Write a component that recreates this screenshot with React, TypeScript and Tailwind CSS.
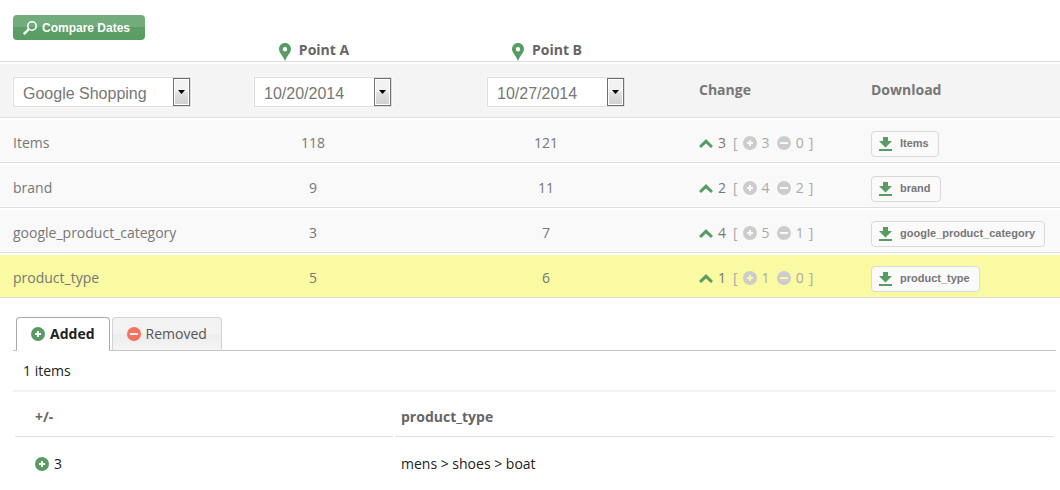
import { useState } from 'react';
import type { ReactNode } from 'react';
import clsx from 'clsx';

interface FieldRow {
  name: string;
  pointA: number;
  pointB: number;
  added: number;
  removed: number;
}

interface ChangedItem {
  count: number;
  value: string;
}

type TabId = 'added' | 'removed';

const ROWS: FieldRow[] = [
  { name: 'Items', pointA: 118, pointB: 121, added: 3, removed: 0 },
  { name: 'brand', pointA: 9, pointB: 11, added: 4, removed: 2 },
  { name: 'google_product_category', pointA: 3, pointB: 7, added: 5, removed: 1 },
  { name: 'product_type', pointA: 5, pointB: 6, added: 1, removed: 0 },
];

const SELECTED_ROW = 'product_type';

const CHANGED: Record<TabId, ChangedItem[]> = {
  added: [{ count: 3, value: 'mens > shoes > boat' }],
  removed: [],
};

function CircleIcon({ sign, className }: { sign: 'plus' | 'minus'; className: string }) {
  const circle = 'M7 0a7 7 0 1 0 0 14A7 7 0 1 0 7 0Z';
  const plus = 'M6 4h2v2h2v2H8v2H6V8H4V6h2Z';
  const minus = 'M3 6h8v2H3Z';
  return (
    <svg viewBox="0 0 14 14" className={clsx('size-3.5 shrink-0', className)} fill="currentColor" aria-hidden="true">
      <path fillRule="evenodd" d={circle + (sign === 'plus' ? plus : minus)} />
    </svg>
  );
}

function PinIcon() {
  return (
    <svg viewBox="0 0 12 18" className="h-[18px] w-3 shrink-0 text-[#589c63]" fill="currentColor" aria-hidden="true">
      <path
        fillRule="evenodd"
        d="M6 0C2.7 0 0 2.6 0 6c0 3.700 3.900 6.400 6 12 2.100-5.600 6-8.300 6-12C12 2.600 9.300 0 6 0Zm0 4a2.200 2.200 0 1 1 0 4.400A2.200 2.200 0 0 1 6 4Z"
      />
    </svg>
  );
}

function SearchIcon() {
  return (
    <svg viewBox="0 0 14 14" className="size-3.5 shrink-0" fill="none" stroke="currentColor" aria-hidden="true">
      <circle cx="9" cy="5" r="4.200" strokeWidth="1.600" />
      <path d="M5.800 8.200.8 13.200" strokeWidth="2.400" />
    </svg>
  );
}

function ArrowUpIcon() {
  return (
    <svg viewBox="0 0 14 9" className="h-[9px] w-3.5 shrink-0 text-[#589c63]" fill="currentColor" aria-hidden="true">
      <path d="M7 0 14 7l-2 2-5-4.500L2 9 0 7Z" />
    </svg>
  );
}

function DownloadIcon() {
  return (
    <svg viewBox="0 0 13 14" className="h-3.5 w-[13px] shrink-0 text-[#589c63]" fill="currentColor" aria-hidden="true">
      <path d="M4 0h5v4h4L6.500 10.500 0 4h4ZM0 12h13v2H0Z" />
    </svg>
  );
}

function Dropdown({
  label,
  value,
  options,
  className,
}: {
  label: string;
  value: string;
  options: string[];
  className: string;
}) {
  return (
    <div className={clsx('relative h-[30px] ring-1 ring-[#fafafa]', className)}>
      <select
        aria-label={label}
        defaultValue={value}
        className="block h-full w-full appearance-none border border-[#dcdcdc] bg-white pt-1 pr-5 pl-[9px] font-['Liberation_Sans',Arial,sans-serif] text-base font-normal text-[#777]"
      >
        {options.map((option) => (
          <option key={option}>{option}</option>
        ))}
      </select>
      <span className="pointer-events-none absolute inset-y-px right-px flex w-[17px] items-center justify-center border border-[#707070] bg-linear-to-b from-[#f2f2f2] from-50% via-[#e2e2e2] via-50% to-[#cfcfcf] ring-1 ring-white ring-inset">
        <svg viewBox="0 0 7 4" className="h-1 w-[7px]" aria-hidden="true">
          <path d="M0 0h7L3.500 4Z" />
        </svg>
      </span>
    </div>
  );
}

function Tab({ active, onClick, children }: { active: boolean; onClick: () => void; children: ReactNode }) {
  return (
    <button
      type="button"
      role="tab"
      aria-selected={active}
      onClick={onClick}
      className={clsx(
        '-mb-px flex h-[34px] items-center gap-[5px] rounded-t border px-3.5',
        active
          ? 'border-[#aaa] border-b-white bg-white font-bold text-[#212121]'
          : 'border-[#d3d3d3] border-b-[#c5c5c5] bg-linear-to-b from-[#f3f3f3] from-50% via-[#ececec] via-50% to-[#f5f5f5] text-[#555]'
      )}
    >
      {children}
    </button>
  );
}

export default function App() {
  const [tab, setTab] = useState<TabId>('added');
  const items = CHANGED[tab];

  return (
    <main className="bg-white font-['Open_Sans',sans-serif] text-sm text-[#777]">
      <table className="w-full table-fixed border-separate border-spacing-x-0 border-spacing-y-0.5 text-left">
        <colgroup>
          <col className="w-[241px]" />
          <col className="w-[233px]" />
          <col className="w-[212px]" />
          <col className="w-[172px]" />
          <col />
        </colgroup>
        <thead>
          <tr className="h-[60px] *:border-b *:border-[#dedede]">
            <td className="pt-[13px] pl-[13px] align-top">
              <button
                type="button"
                className="flex h-[25px] w-33 items-center gap-[5px] rounded bg-linear-to-b from-[#73ac7c] from-50% via-[#5c9f66] via-50% to-[#589c63] px-2.5 font-['Liberation_Sans',Arial,sans-serif] text-xs font-bold text-white"
              >
                <SearchIcon />
                Compare Dates
              </button>
            </td>
            {['Point A', 'Point B'].map((label) => (
              <th key={label} scope="col" className="align-bottom font-bold text-[#666]">
                <div className="flex w-[146px] items-end justify-center gap-2">
                  <PinIcon />
                  <span className="pb-px">{label}</span>
                </div>
              </th>
            ))}
            <td colSpan={2} />
          </tr>
          <tr className="h-[54px] *:border-b *:border-[#dedede] *:bg-[#f4f4f4] *:pl-[13px]">
            <td className="pt-0.5">
              <Dropdown label="Channel" value="Google Shopping" options={['Google Shopping', 'Bing Shopping']} className="w-[178px]" />
            </td>
            <td className="pt-0.5">
              <Dropdown label="Point A date" value="10/20/2014" options={['10/20/2014', '10/27/2014']} className="w-[138px]" />
            </td>
            <td className="pt-0.5">
              <Dropdown label="Point B date" value="10/27/2014" options={['10/20/2014', '10/27/2014']} className="w-[138px]" />
            </td>
            <th scope="col" className="pb-0.5 font-bold">Change</th>
            <th scope="col" className="pb-0.5 font-bold">Download</th>
          </tr>
        </thead>
        <tbody>
          {ROWS.map((row) => (
            <tr
              key={row.name}
              className={clsx(
                'h-[43px] *:border-b *:border-[#dedede]',
                row.name === SELECTED_ROW ? 'bg-[#fafaa2]' : 'bg-[#f9f9f9]'
              )}
            >
              <th scope="row" className="pt-1 pl-[13px] font-normal">{row.name}</th>
              <td className="pt-1">
                <div className="w-36 text-center">{row.pointA}</div>
              </td>
              <td className="pt-1">
                <div className="w-36 text-center">{row.pointB}</div>
              </td>
              <td className="pt-1 pl-[13px]">
                <div className="flex items-center gap-[5px]">
                  <ArrowUpIcon />
                  <span>{row.pointB - row.pointA}</span>
                  <span className="ml-0.5 flex items-center gap-[5px] text-[#aaa]">
                    <span>[</span>
                    <CircleIcon sign="plus" className="text-[#ccc]" />
                    <span>{row.added}</span>
                    <CircleIcon sign="minus" className="ml-0.5 text-[#ccc]" />
                    <span>{row.removed}</span>
                    <span>]</span>
                  </span>
                </div>
              </td>
              <td className="pt-1.5 pl-[13px]">
                <button
                  type="button"
                  className="flex h-[26px] items-center gap-2 rounded border border-[#d9d9d9] bg-[#fafafa] pr-[9px] pl-[7px] font-['Liberation_Sans',Arial,sans-serif] text-[11px] font-bold"
                >
                  <DownloadIcon />
                  {row.name}
                </button>
              </td>
            </tr>
          ))}
        </tbody>
      </table>

      <section className="mt-[17px] mr-1 ml-[13px] text-[#212121]">
        <div role="tablist" className="flex gap-0.5 border-b border-[#c5c5c5] pl-[3px]">
          <Tab active={tab === 'added'} onClick={() => setTab('added')}>
            <CircleIcon sign="plus" className="text-[#589c63]" />
            Added
          </Tab>
          <Tab active={tab === 'removed'} onClick={() => setTab('removed')}>
            <CircleIcon sign="minus" className="text-[#f4735e]" />
            Removed
          </Tab>
        </div>
        <div role="tabpanel">
          <p className="border-b-2 border-[#f3f3f3] py-[9px] pl-2.5 leading-[21px]">{items.length} items</p>
          <table className="w-full table-fixed border-separate border-spacing-x-0.5 border-spacing-y-0 text-left">
            <colgroup>
              <col className="w-[378px]" />
              <col />
            </colgroup>
            <thead>
              <tr className="h-[45px] *:border-b *:border-[#dedede] *:pt-1.5 *:font-bold *:text-[#666]">
                <th scope="col" className="pl-5">+/-</th>
                <th scope="col" className="pl-1.5">product_type</th>
              </tr>
            </thead>
            <tbody>
              {items.map((item) => (
                <tr key={item.value} className="h-[53px]">
                  <td className="pl-5">
                    <div className="flex items-center gap-[5px]">
                      <CircleIcon sign="plus" className="text-[#589c63]" />
                      {item.count}
                    </div>
                  </td>
                  <td className="pl-1.5">{item.value}</td>
                </tr>
              ))}
            </tbody>
          </table>
        </div>
      </section>
    </main>
  );
}
